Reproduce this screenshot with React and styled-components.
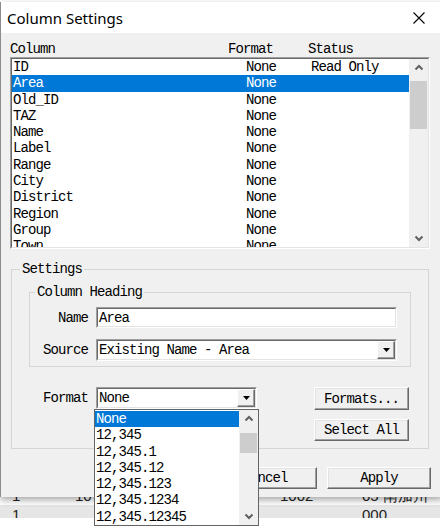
import React from 'react';
import styled, { createGlobalStyle } from 'styled-components';

const mono = `'Liberation Mono', 'DejaVu Sans Mono', monospace`;

const GlobalStyle = createGlobalStyle`
  body { margin: 0; overflow: hidden; background: #fff; }
`;

const columns = [
  { name: 'ID', format: 'None', status: 'Read Only' },
  { name: 'Area', format: 'None', status: '' },
  { name: 'Old_ID', format: 'None', status: '' },
  { name: 'TAZ', format: 'None', status: '' },
  { name: 'Name', format: 'None', status: '' },
  { name: 'Label', format: 'None', status: '' },
  { name: 'Range', format: 'None', status: '' },
  { name: 'City', format: 'None', status: '' },
  { name: 'District', format: 'None', status: '' },
  { name: 'Region', format: 'None', status: '' },
  { name: 'Group', format: 'None', status: '' },
  { name: 'Town', format: 'None', status: '' },
];

const formats = ['None', '12,345', '12,345.1', '12,345.12', '12,345.123', '12,345.1234', '12,345.12345'];

const Chevron = ({ down }) => (
  <svg width="10" height="7" viewBox="0 0 10 7">
    <path d={down ? 'M1.5 1.5 L5 5 L8.5 1.5' : 'M1.5 5.5 L5 2 L8.5 5.5'} fill="none" stroke="#606060" strokeWidth="2" />
  </svg>
);

const DropArrow = () => (
  <svg width="7" height="4" viewBox="0 0 7 4">
    <path d="M0 0 H7 L3.5 4 Z" fill="#000" />
  </svg>
);

const Desktop = styled.div`
  position: relative;
  width: 440px;
  height: 531px;
  overflow: hidden;
  background: #fff;
  font-family: 'Liberation Sans', Arial, sans-serif;
`;

const Sheet = styled.div`
  display: flex;
  flex-direction: column;
  justify-content: flex-end;
  height: 531px;
  padding-bottom: 13px;
  box-sizing: border-box;
`;

const SheetRow = styled.div`
  display: grid;
  grid-template-columns: 63px 205px 82px 1fr;
  height: ${p => p.$h}px;
  line-height: ${p => p.$lh}px;
  padding-left: 12px;
  overflow: hidden;
  white-space: nowrap;
  font-size: 15px;
  color: #222;
  background: ${p => p.$bg || 'transparent'};
`;

const Dialog = styled.div`
  position: absolute;
  left: 0;
  top: 2px;
  width: 442px;
  height: 495px;
  border-left: 1px solid #8c8c8c;
  display: flex;
  flex-direction: column;
  box-shadow: 0 3px 7px rgba(0, 0, 0, 0.35);
`;

const TitleBar = styled.div`
  height: 31px;
  background: #fff;
  display: flex;
  align-items: center;
  justify-content: space-between;
  padding: 0 18px 0 6px;
  font-family: 'Noto Sans', 'Open Sans', sans-serif;
  font-size: 15px;
  color: #000;
  svg { display: block; }
`;

const Body = styled.div`
  flex: 1;
  background: #f0f0f0;
  padding: 8px 13px 0 9px;
  font-family: ${mono};
  font-size: 14px;
  letter-spacing: -0.9px;
  color: #000;
`;

const HeaderRow = styled.div`
  display: grid;
  grid-template-columns: 218px 80px 1fr;
  height: 16px;
  line-height: 16px;
  white-space: nowrap;
`;

const Sunken = styled.div`
  border: 1px solid;
  border-color: #a0a0a0 #fff #fff #a0a0a0;
`;

const SunkenInner = styled.div`
  border: 1px solid;
  border-color: #696969 #e3e3e3 #e3e3e3 #696969;
  background: #fff;
  display: flex;
  height: 100%;
  box-sizing: border-box;
`;

const ListBox = styled(Sunken)`
  height: 192px;
  box-sizing: border-box;
`;

const Rows = styled.div`
  flex: 1;
  overflow: hidden;
`;

const Row = styled.div`
  display: grid;
  grid-template-columns: ${p => p.$cols};
  height: 16.3px;
  line-height: 16.3px;
  padding-left: 1px;
  white-space: nowrap;
  background: ${p => (p.$selected ? '#0078d7' : 'transparent')};
  color: ${p => (p.$selected ? '#fff' : '#000')};
`;

const ScrollBar = styled.div`
  width: 19px;
  flex: none;
  background: #f0f0f0;
  display: flex;
  flex-direction: column;
`;

const ScrollBtn = styled.div`
  height: 17px;
  display: flex;
  align-items: center;
  justify-content: center;
  margin-top: ${p => (p.$bottom ? 'auto' : '0')};
  svg { display: block; }
`;

const Thumb = styled.div`
  margin: ${p => p.$offset}px 1px 0;
  height: ${p => p.$size}px;
  background: #cdcdcd;
`;

const Group = styled.fieldset`
  margin: ${p => p.$mt}px ${p => p.$mx}px 0;
  padding: ${p => p.$pad};
  border: 1px solid #d5d5d5;
  min-width: 0;
`;

const Legend = styled.legend`
  margin-left: ${p => p.$ml}px;
  padding: 0 2px;
  line-height: 16px;
`;

const FieldGrid = styled.div`
  display: grid;
  grid-template-columns: 58px 301px;
  column-gap: 8px;
  row-gap: 11px;
  align-items: center;
`;

const Label = styled.div`
  text-align: right;
  white-space: nowrap;
`;

const Field = styled(Sunken)`
  height: ${p => p.$h}px;
  box-sizing: border-box;
`;

const FieldInner = styled(SunkenInner)`
  align-items: center;
  padding-left: 1px;
  white-space: nowrap;
`;

const FieldText = styled.div`
  flex: 1;
  line-height: 16px;
`;

const DropBtn = styled.div`
  width: 18px;
  height: 100%;
  box-sizing: border-box;
  background: #f0f0f0;
  border: 1px solid;
  border-color: #fff #696969 #696969 #fff;
  box-shadow: inset -1px -1px 0 #a0a0a0;
  display: flex;
  align-items: center;
  justify-content: center;
  svg { display: block; }
`;

const Lower = styled.div`
  display: flex;
  justify-content: space-between;
  margin: 20px 2px 0 1px;
`;

const FormatRow = styled.div`
  display: grid;
  grid-template-columns: 58px 161px;
  column-gap: 8px;
  align-items: start;
  height: 22px;
  ${Label} { line-height: 22px; }
`;

const ComboWrap = styled.div`
  position: relative;
`;

const DropList = styled.div`
  position: absolute;
  left: -2px;
  top: 100%;
  width: 165px;
  height: 117px;
  box-sizing: border-box;
  border: 1px solid #646464;
  background: #fff;
  display: flex;
  z-index: 2;
`;

const DropRows = styled.div`
  flex: 1;
  padding-top: 1px;
  overflow: hidden;
`;

const ButtonStack = styled.div`
  display: flex;
  flex-direction: column;
  gap: 9px;
`;

const Button = styled.div`
  width: ${p => p.$w}px;
  height: ${p => p.$h}px;
  box-sizing: border-box;
  background: #f0f0f0;
  border: 1px solid;
  border-color: #fff #696969 #696969 #fff;
  box-shadow: inset -1px -1px 0 #a0a0a0, inset 1px 1px 0 #e3e3e3;
  display: flex;
  align-items: center;
  justify-content: center;
  white-space: nowrap;
`;

const Footer = styled.div`
  display: flex;
  justify-content: flex-end;
  gap: 10px;
  margin: 18px -1px 0 0;
`;

export default function App() {
  return (
    <Desktop>
      <GlobalStyle />
      <Sheet>
        <SheetRow $h={16} $lh={14}>
          <span>1</span><span>10</span><span>1002</span><span>05 南加州</span>
        </SheetRow>
        <SheetRow $h={13} $lh={20} $bg="#e6e6e6">
          <span>1</span><span></span><span></span><span>000</span>
        </SheetRow>
      </Sheet>

      <Dialog>
        <TitleBar>
          <span>Column Settings</span>
          <svg width="12" height="12" viewBox="0 0 12 12">
            <path d="M0.5 0.5 L11.5 11.5 M11.5 0.5 L0.5 11.5" stroke="#000" strokeWidth="1.1" />
          </svg>
        </TitleBar>
        <Body>
          <HeaderRow>
            <span>Column</span><span>Format</span><span>Status</span>
          </HeaderRow>
          <ListBox>
            <SunkenInner>
              <Rows>
                {columns.map(c => (
                  <Row key={c.name} $cols="233px 65px 1fr" $selected={c.name === 'Area'}>
                    <span>{c.name}</span><span>{c.format}</span><span>{c.status}</span>
                  </Row>
                ))}
              </Rows>
              <ScrollBar>
                <ScrollBtn><Chevron /></ScrollBtn>
                <Thumb $offset={5} $size={48} />
                <ScrollBtn $bottom><Chevron down /></ScrollBtn>
              </ScrollBar>
            </SunkenInner>
          </ListBox>

          <Group $mt={12} $mx={1} $pad="0 17px 7px">
            <Legend $ml={-9}>Settings</Legend>
            <Group $mt={7} $mx={0} $pad="7px 13px 5px 0">
              <Legend $ml={5}>Column Heading</Legend>
              <FieldGrid>
                <Label>Name</Label>
                <Field $h={21}>
                  <FieldInner><FieldText>Area</FieldText></FieldInner>
                </Field>
                <Label>Source</Label>
                <Field $h={22}>
                  <FieldInner>
                    <FieldText>Existing Name - Area</FieldText>
                    <DropBtn><DropArrow /></DropBtn>
                  </FieldInner>
                </Field>
              </FieldGrid>
            </Group>

            <Lower>
              <FormatRow>
                <Label>Format</Label>
                <ComboWrap>
                  <Field $h={22}>
                    <FieldInner>
                      <FieldText>None</FieldText>
                      <DropBtn><DropArrow /></DropBtn>
                    </FieldInner>
                  </Field>
                  <DropList>
                    <DropRows>
                      {formats.map(f => (
                        <Row key={f} $cols="1fr" $selected={f === 'None'}>
                          <span>{f}</span>
                        </Row>
                      ))}
                    </DropRows>
                    <ScrollBar>
                      <ScrollBtn><Chevron /></ScrollBtn>
                      <Thumb $offset={6} $size={20} />
                      <ScrollBtn $bottom><Chevron down /></ScrollBtn>
                    </ScrollBar>
                  </DropList>
                </ComboWrap>
              </FormatRow>
              <ButtonStack>
                <Button $w={95} $h={23}>Formats...</Button>
                <Button $w={95} $h={22}>Select All</Button>
              </ButtonStack>
            </Lower>
          </Group>

          <Footer>
            <Button $w={104} $h={22}>OK</Button>
            <Button $w={104} $h={22}>Cancel</Button>
            <Button $w={104} $h={22}>Apply</Button>
          </Footer>
        </Body>
      </Dialog>
    </Desktop>
  );
}
